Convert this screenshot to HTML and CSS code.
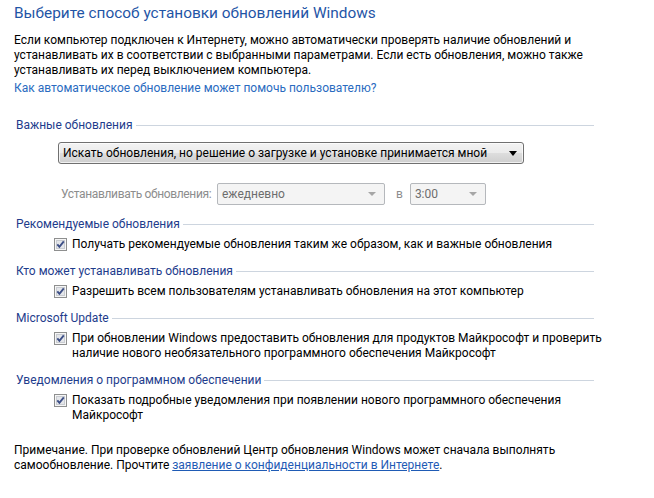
FILE: index.html
```html
<!DOCTYPE html>
<html lang="ru">
<head>
  <meta charset="UTF-8">
  <title>Центр обновления Windows</title>
  <link rel="stylesheet" href="styles.css">
</head>
<body>
  <div class="page">
    <h1 class="title">Выберите способ установки обновлений Windows</h1>
    <p class="intro">Если компьютер подключен к Интернету, можно автоматически проверять наличие обновлений и<br>
      устанавливать их в соответствии с выбранными параметрами. Если есть обновления, можно также<br>
      устанавливать их перед выключением компьютера.</p>
    <a class="help-link" href="#">Как автоматическое обновление может помочь пользователю?</a>

    <div class="group group-first">
      <div class="group-head"><span>Важные обновления</span></div>
      <div class="combo combo-main">
        <span class="combo-text">Искать обновления, но решение о загрузке и установке принимается мной</span>
        <span class="arrow"></span>
      </div>
      <div class="schedule">
        <span class="schedule-label">Устанавливать обновления:</span>
        <div class="combo combo-off combo-day">
          <span class="combo-text">ежедневно</span>
          <span class="arrow"></span>
        </div>
        <span class="schedule-at">в</span>
        <div class="combo combo-off combo-time">
          <span class="combo-text">3:00</span>
          <span class="arrow"></span>
        </div>
      </div>
    </div>

    <div class="group">
      <div class="group-head"><span>Рекомендуемые обновления</span></div>
      <label class="check-row">
        <svg class="check" width="13" height="13" viewBox="0 0 13 13"><rect x="0.5" y="0.5" width="12" height="12" fill="#f6f6f6" stroke="#8e8f8f"/><rect x="2.5" y="2.5" width="8" height="8" fill="#e4e6ea" stroke="#c9ccd1"/><path d="M3.3 6.4 L5.4 8.8 L9.8 3.4" fill="none" stroke="#3d4f86" stroke-width="1.9"/></svg>
        <span>Получать рекомендуемые обновления таким же образом, как и важные обновления</span>
      </label>
    </div>

    <div class="group">
      <div class="group-head"><span>Кто может устанавливать обновления</span></div>
      <label class="check-row">
        <svg class="check" width="13" height="13" viewBox="0 0 13 13"><rect x="0.5" y="0.5" width="12" height="12" fill="#f6f6f6" stroke="#8e8f8f"/><rect x="2.5" y="2.5" width="8" height="8" fill="#e4e6ea" stroke="#c9ccd1"/><path d="M3.3 6.4 L5.4 8.8 L9.8 3.4" fill="none" stroke="#3d4f86" stroke-width="1.9"/></svg>
        <span>Разрешить всем пользователям устанавливать обновления на этот компьютер</span>
      </label>
    </div>

    <div class="group">
      <div class="group-head"><span>Microsoft Update</span></div>
      <label class="check-row">
        <svg class="check" width="13" height="13" viewBox="0 0 13 13"><rect x="0.5" y="0.5" width="12" height="12" fill="#f6f6f6" stroke="#8e8f8f"/><rect x="2.5" y="2.5" width="8" height="8" fill="#e4e6ea" stroke="#c9ccd1"/><path d="M3.3 6.4 L5.4 8.8 L9.8 3.4" fill="none" stroke="#3d4f86" stroke-width="1.9"/></svg>
        <span>При обновлении Windows предоставить обновления для продуктов Майкрософт и проверить<br>наличие нового необязательного программного обеспечения Майкрософт</span>
      </label>
    </div>

    <div class="group">
      <div class="group-head"><span>Уведомления о программном обеспечении</span></div>
      <label class="check-row">
        <svg class="check" width="13" height="13" viewBox="0 0 13 13"><rect x="0.5" y="0.5" width="12" height="12" fill="#f6f6f6" stroke="#8e8f8f"/><rect x="2.5" y="2.5" width="8" height="8" fill="#e4e6ea" stroke="#c9ccd1"/><path d="M3.3 6.4 L5.4 8.8 L9.8 3.4" fill="none" stroke="#3d4f86" stroke-width="1.9"/></svg>
        <span>Показать подробные уведомления при появлении нового программного обеспечения<br>Майкрософт</span>
      </label>
    </div>

    <p class="note">Примечание. При проверке обновлений Центр обновления Windows может сначала выполнять<br>
      самообновление. Прочтите <a href="#">заявление о конфиденциальности в Интернете</a>.</p>
  </div>
</body>
</html>
```

FILE: styles.css
```css
body {
  margin: 0;
  background-color: #fff;
  color: #000;
  font-family: Roboto, "Noto Sans", sans-serif;
  font-size: 12px;
  line-height: 15px;
}

.page {
  padding: 3px 0 0 14px;
  width: 580px;
}

.title {
  margin: 0;
  font-size: 15.4px;
  font-weight: normal;
  line-height: 20px;
  color: #1f55a6;
}

.intro {
  margin: 10px 0 0;
  white-space: nowrap;
}

.help-link {
  display: block;
  margin-top: 3px;
  color: #2a6bc0;
  text-decoration: none;
}

/* группы настроек */
.group { margin-top: 12px; }
.group-first { margin-top: 22px; }

.group-head {
  display: flex;
  align-items: center;
  padding-left: 2px;
  color: #1e3c8c;
}
.group-head::after {
  content: "";
  flex: 1;
  height: 1px;
  margin-left: 3px;
  background-color: #cdd5df;
}

.combo {
  display: flex;
  align-items: center;
  justify-content: space-between;
  height: 22px;
  box-sizing: border-box;
  padding: 0 6px 0 4px;
  border-radius: 3px;
}
.combo-main {
  width: 466px;
  margin: 9px 0 0 44px;
  border: 1px solid #707070;
  background: linear-gradient(#f3f3f3 0%, #ebebeb 48%, #dddddd 52%, #cfcfcf 100%);
  box-shadow: inset 0 0 0 1px rgba(255, 255, 255, 0.7);
}
.arrow {
  width: 0;
  height: 0;
  border-left: 4px solid transparent;
  border-right: 4px solid transparent;
  border-top: 5px solid #000;
}

.schedule {
  display: flex;
  align-items: center;
  margin: 19px 0 0 47px;
  color: #8d8d8d;
}
.schedule-label {
  width: 156px;
  white-space: nowrap;
  letter-spacing: -0.35px;
}
.schedule-at { margin: 0 7px 0 11px; }

.combo-off {
  border: 1px solid #b5b8bc;
  border-radius: 2px;
  background-color: #f4f4f4;
  color: #6d6d6d;
  padding-right: 8px;
}
.combo-off .arrow {
  border-left-width: 4px;
  border-right-width: 4px;
  border-top: 4px solid #a6a6a6;
}
.combo-day { width: 168px; }
.combo-time { width: 76px; }

.check-row {
  display: flex;
  align-items: flex-start;
  margin: 5px 0 0 40px;
  white-space: nowrap;
}
.check {
  flex: none;
  margin: 1px 5px 0 0;
}

.note {
  margin: 20px 0 0;
  white-space: nowrap;
}
.note a {
  color: #1f5bb5;
  text-decoration: underline;
}
```
